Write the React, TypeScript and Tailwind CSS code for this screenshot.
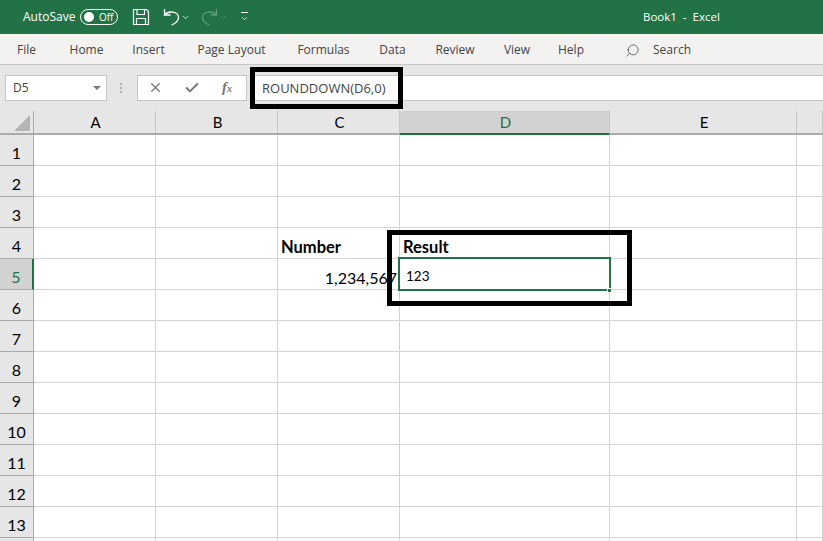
import { Search, ChevronDown, X, Check } from "lucide-react";

const menus = [
  { label: "File", w: "w-[53px]" },
  { label: "Home", w: "w-[67px]" },
  { label: "Insert", w: "w-[57px]" },
  { label: "Page Layout", w: "w-[109px]" },
  { label: "Formulas", w: "w-[75px]" },
  { label: "Data", w: "w-[63px]" },
  { label: "Review", w: "w-[62px]" },
  { label: "View", w: "w-[62px]" },
  { label: "Help", w: "w-[46px]" },
];

const columns = [
  { name: "A", w: "w-[122px]" },
  { name: "B", w: "w-[122px]" },
  { name: "C", w: "w-[122px]" },
  { name: "D", w: "w-[210px]" },
  { name: "E", w: "w-[187px]" },
  { name: "F", w: "w-[26px]" },
];

const rows = Array.from({ length: 14 }, (_, i) => i + 1);

function cellContent(col: string, row: number) {
  if (col === "C" && row === 4)
    return <span className="pl-[3px] pt-[9px] text-[16.5px] font-bold text-black">Number</span>;
  if (col === "D" && row === 4)
    return <span className="pl-[3px] pt-[9px] text-[16.5px] font-bold text-black">Result</span>;
  if (col === "C" && row === 5)
    return <span className="w-full pt-[8px] pr-[2px] text-right text-[16px] text-black">1,234,567</span>;
  if (col === "D" && row === 5) return <span className="pl-[6px] pt-[4px] text-[13.5px] text-black">123</span>;
  return null;
}

function UndoArrow({ className }: { className?: string }) {
  return (
    <svg className={className} width="17" height="18" viewBox="0 0 17 18" fill="none" stroke="currentColor" strokeWidth="1.3">
      <path d="M1.5 1v6h6" />
      <path d="M1.5 7C5 2.5 15.5 3 15.5 9.5 15.5 13 12 15.5 8.5 17" />
    </svg>
  );
}

export default function App() {
  return (
    <div className="relative h-[541px] w-[823px] overflow-hidden bg-white font-['Open_Sans','Noto_Sans',sans-serif] text-[12px]">
      {/* Title bar */}
      <div className="flex h-[34px] items-center bg-[#217346] text-white">
        <span className="ml-[23px] w-[57px] text-[12px]">AutoSave</span>
        <div className="flex h-[16px] w-[38px] items-center rounded-full border border-white pl-[3px]">
          <div className="h-[10px] w-[10px] rounded-full bg-white" />
          <span className="ml-[5px] text-[10px]">Off</span>
        </div>
        <svg className="ml-[14px]" width="18" height="18" viewBox="0 0 18 18" fill="none" stroke="white" strokeWidth="1.2">
          <path d="M1.5 1.5h13l2 2v13h-15z" />
          <path d="M5 1.5v5h7.5v-5M4.5 16.5v-6h9v6" />
        </svg>
        <UndoArrow className="ml-[13px]" />
        <ChevronDown className="ml-[1px]" size={9} strokeWidth={2} />
        <UndoArrow className="ml-[11px] -scale-x-100 text-[#5d9a7b]" />
        <ChevronDown className="ml-[1px] text-[#5d9a7b]" size={9} strokeWidth={2} />
        <div className="ml-[12px] flex flex-col items-center">
          <div className="mb-[1px] h-px w-[7px] bg-white" />
          <ChevronDown size={9} strokeWidth={2} />
        </div>
        <span className="ml-[394px] text-[11.5px]">Book1&nbsp; -&nbsp; Excel</span>
      </div>

      {/* Menu bar */}
      <div className="flex h-[31px] items-center border-b border-[#c6c6c6] bg-[#f3f2f1] pt-[2px] text-[#444444]">
        {menus.map((m) => (
          <span key={m.label} className={`${m.w} text-center`}>
            {m.label}
          </span>
        ))}
        <Search className="ml-[31px] -scale-x-100" size={15} strokeWidth={1.2} />
        <span className="ml-[13px]">Search</span>
      </div>

      {/* Formula bar */}
      <div className="flex h-[46px] items-center bg-[#e6e6e6] pb-[1px]">
        <div className="ml-[5px] flex h-[26px] w-[102px] items-center justify-between border border-[#c6c6c6] bg-white pl-[7px] pr-[5px] text-[#444444]">
          <span>D5</span>
          <div className="h-0 w-0 border-x-[4px] border-t-[4px] border-x-transparent border-t-[#777777]" />
        </div>
        <div className="ml-[13px] mr-[15px] flex flex-col gap-[2px]">
          <div className="h-[2px] w-[2px] bg-[#b0b0b0]" />
          <div className="h-[2px] w-[2px] bg-[#b0b0b0]" />
          <div className="h-[2px] w-[2px] bg-[#b0b0b0]" />
        </div>
        <div className="flex h-[26px] w-[110px] items-center border border-[#c6c6c6] bg-white text-[#777777]">
          <X className="ml-[10px]" size={15} strokeWidth={2} />
          <Check className="ml-[21px]" size={16} strokeWidth={3} />
          <span className="ml-[22px] font-['Liberation_Serif',serif] text-[15px] font-bold italic">
            f<span className="text-[10px]">x</span>
          </span>
        </div>
        <div className="ml-[3px] flex h-[26px] flex-1 items-center border-y border-[#c6c6c6] bg-white pl-[12px] pt-[2px] text-[13px] text-[#444444]">
          ROUNDDOWN(D6,0)
        </div>
      </div>

      {/* Column headers */}
      <div className="flex h-[24px] border-b-2 border-[#ababab] bg-[#e6e6e6] font-['Lato',sans-serif] text-[15px] text-black">
        <div className="relative w-[34px] border-r border-[#ababab]">
          <div className="absolute bottom-[2px] right-[3px] h-0 w-0 border-b-[16px] border-l-[16px] border-b-[#b4b4b4] border-l-transparent" />
        </div>
        {columns.map((c) => (
          <div
            key={c.name}
            className={`${c.w} flex items-center justify-center border-r border-[#c6c6c6] pl-[2px] ${
              c.name === "D" ? "-mb-[2px] border-b-2 border-b-[#217346] bg-[#d2d2d2] text-[#217346]" : ""
            }`}
          >
            {c.name !== "F" && c.name}
          </div>
        ))}
      </div>

      {/* Sheet grid */}
      <div className="font-['Lato',sans-serif] text-[15px]">
        {rows.map((r) => (
          <div key={r} className="flex h-[31px]">
            <div
              className={`flex w-[34px] items-center justify-center border-b border-r border-[#ababab] pt-[6px] text-[16px] ${
                r === 5 ? "border-r-2 border-r-[#217346] bg-[#d2d2d2] text-[#217346]" : "bg-[#e6e6e6] text-black"
              }`}
            >
              {r < 14 && r}
            </div>
            {columns.map((c) => (
              <div key={c.name} className={`${c.w} flex items-center border-b border-r border-[#d4d4d4]`}>
                {cellContent(c.name, r)}
              </div>
            ))}
          </div>
        ))}
      </div>

      {/* Selected cell D5 */}
      <div className="absolute left-[398px] top-[257px] h-[34px] w-[213px] border-2 border-[#217346]" />
      <div className="absolute left-[607px] top-[288px] h-[5px] w-[5px] border border-white bg-[#217346]" />

      {/* Black annotation boxes */}
      <div className="absolute left-[250px] top-[67px] h-[42px] w-[153px] border-[5px] border-black" />
      <div className="absolute left-[387px] top-[230px] h-[76px] w-[245px] border-[5px] border-black" />
    </div>
  );
}
